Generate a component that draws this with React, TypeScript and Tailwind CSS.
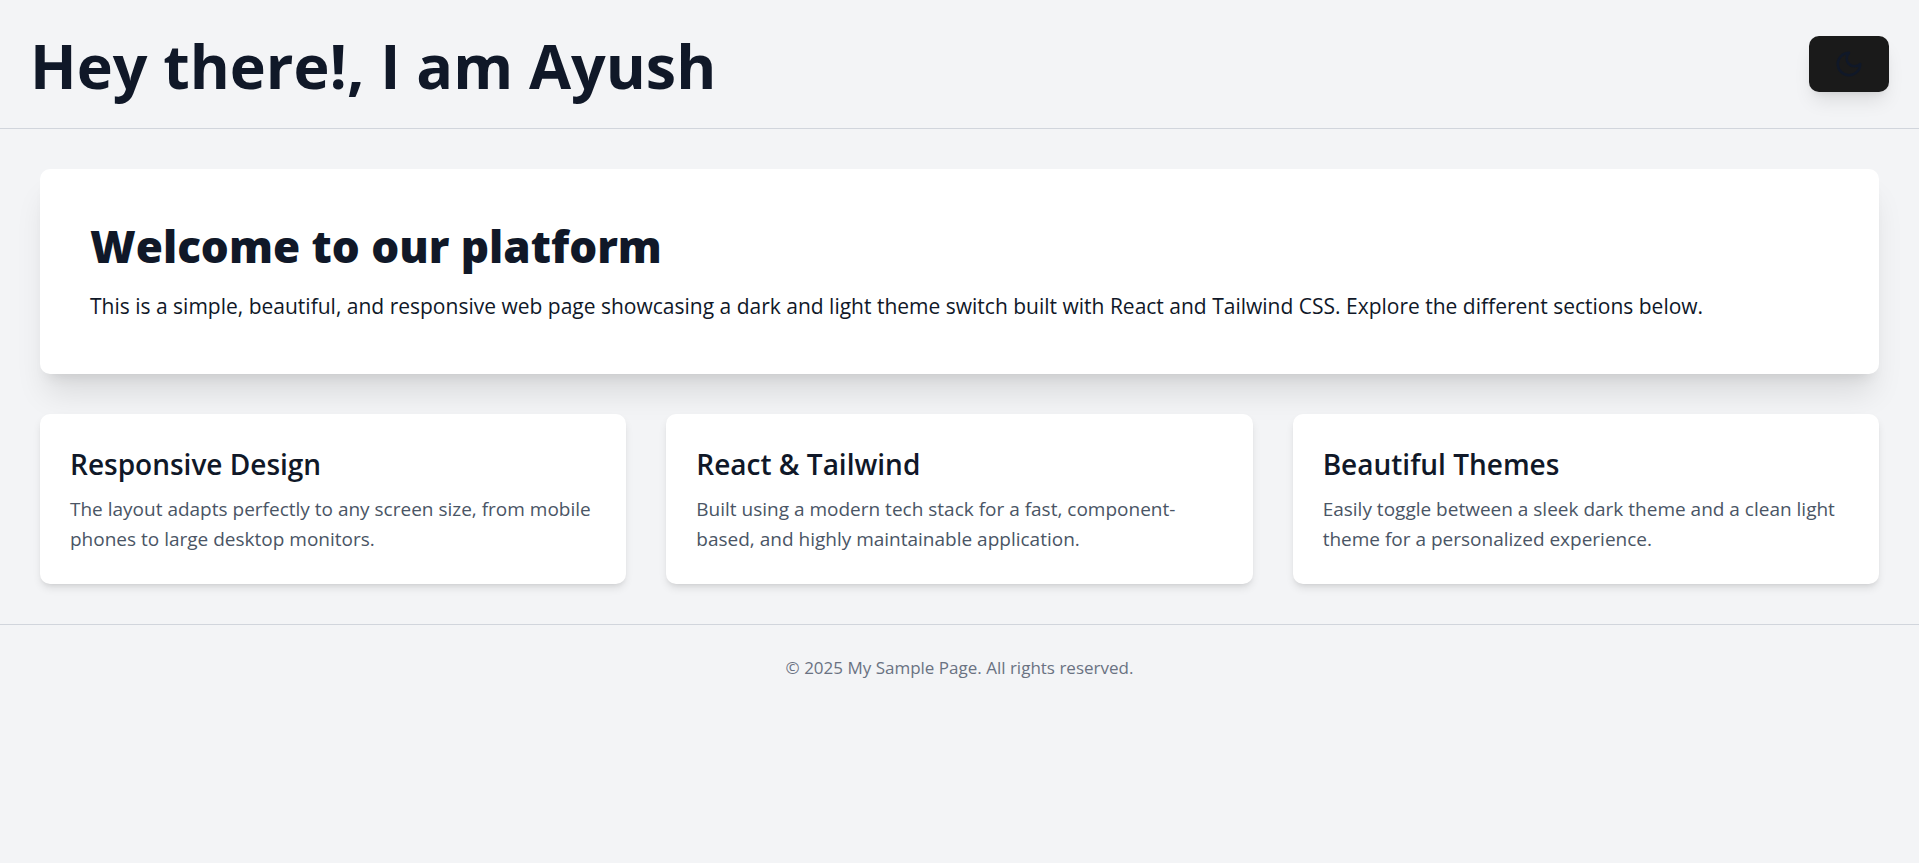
import { useState } from "react";

const features = [
  {
    title: "Responsive Design",
    text: "The layout adapts perfectly to any screen size, from mobile phones to large desktop monitors.",
  },
  {
    title: "React & Tailwind",
    text: "Built using a modern tech stack for a fast, component-based, and highly maintainable application.",
  },
  {
    title: "Beautiful Themes",
    text: "Easily toggle between a sleek dark theme and a clean light theme for a personalized experience.",
  },
];

function MoonIcon() {
  return (
    <svg className="size-[30px]" viewBox="0 0 24 24" fill="none" stroke="currentColor" strokeWidth={2} strokeLinecap="round" strokeLinejoin="round" aria-hidden="true">
      <path d="M12 3a6 6 0 0 0 9 9 9 9 0 1 1-9-9Z" />
    </svg>
  );
}

export default function App() {
  const [pressed, setPressed] = useState(false);
  return (
    <div className="min-h-screen bg-gray-100 font-['Segoe_UI','Open_Sans','Noto_Sans',sans-serif] text-gray-900">
      <header className="flex items-center justify-between border-b border-gray-300 px-[30px] pt-8 pb-7">
        <h1 className="text-[61px] leading-[68px] font-bold">Hey there!, I am Ayush</h1>
        <button
          type="button"
          aria-label="Toggle theme"
          aria-pressed={pressed}
          onClick={() => setPressed(!pressed)}
          className="mb-1 flex h-14 w-20 items-center justify-center rounded-[10px] bg-[#1a1a1a] shadow-[0_12px_19px_-4px_rgb(0_0_0/0.1),0_5px_8px_-5px_rgb(0_0_0/0.1)]"
        >
          <MoonIcon />
        </button>
      </header>
      <main className="flex flex-col gap-10 p-10">
        <section className="rounded-[10px] bg-white p-[50px] shadow-[0_25px_31px_-6px_rgb(0_0_0/0.1),0_10px_13px_-8px_rgb(0_0_0/0.1)]">
          <h2 className="mb-4 text-[44px] leading-[54px] font-extrabold">Welcome to our platform</h2>
          <p className="text-[21px] leading-[35px]">
            This is a simple, beautiful, and responsive web page showcasing a dark and light theme switch built with React and Tailwind CSS. Explore the different sections below.
          </p>
        </section>
        <div className="grid grid-cols-1 gap-10 md:grid-cols-3">
          {features.map((f) => (
            <section key={f.title} className="rounded-[10px] bg-white p-[30px] shadow-[0_5px_8px_-1px_rgb(0_0_0/0.1),0_3px_5px_-3px_rgb(0_0_0/0.1)]">
              <h3 className="mb-[10px] text-[28px] leading-[40px] font-semibold">{f.title}</h3>
              <p className="text-[19px] leading-[30px] text-gray-600">{f.text}</p>
            </section>
          ))}
        </div>
      </main>
      <footer className="border-t border-gray-300 p-[30px] text-center text-[17px] leading-[25px] text-gray-500">
        <p>© 2025 My Sample Page. All rights reserved.</p>
      </footer>
    </div>
  );
}
